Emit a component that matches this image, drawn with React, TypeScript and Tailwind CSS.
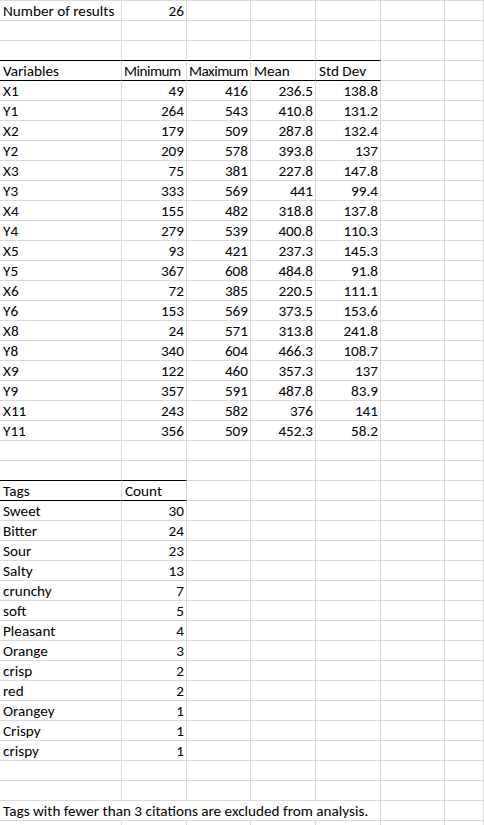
type Cell = { text?: string; right?: boolean; span?: number; tight?: boolean };
type Row = { cells: Cell[]; topBlack?: number };

const vars: [string, number, number, string, string][] = [
  ["X1", 49, 416, "236.5", "138.8"],
  ["Y1", 264, 543, "410.8", "131.2"],
  ["X2", 179, 509, "287.8", "132.4"],
  ["Y2", 209, 578, "393.8", "137"],
  ["X3", 75, 381, "227.8", "147.8"],
  ["Y3", 333, 569, "441", "99.4"],
  ["X4", 155, 482, "318.8", "137.8"],
  ["Y4", 279, 539, "400.8", "110.3"],
  ["X5", 93, 421, "237.3", "145.3"],
  ["Y5", 367, 608, "484.8", "91.8"],
  ["X6", 72, 385, "220.5", "111.1"],
  ["Y6", 153, 569, "373.5", "153.6"],
  ["X8", 24, 571, "313.8", "241.8"],
  ["Y8", 340, 604, "466.3", "108.7"],
  ["X9", 122, 460, "357.3", "137"],
  ["Y9", 357, 591, "487.8", "83.9"],
  ["X11", 243, 582, "376", "141"],
  ["Y11", 356, 509, "452.3", "58.2"],
];

const tags: [string, number][] = [
  ["Sweet", 30],
  ["Bitter", 24],
  ["Sour", 23],
  ["Salty", 13],
  ["crunchy", 7],
  ["soft", 5],
  ["Pleasant", 4],
  ["Orange", 3],
  ["crisp", 2],
  ["red", 2],
  ["Orangey", 1],
  ["Crispy", 1],
  ["crispy", 1],
];

const COLS = 7;

function buildRows(): Row[] {
  const rows: Row[] = [];
  rows.push({ cells: [{ text: "Number of results" }, { text: "26", right: true }] });
  rows.push({ cells: [] });
  rows.push({ cells: [] });
  rows.push({
    topBlack: 5,
    cells: [
      { text: "Variables" },
      { text: "Minimum", tight: true },
      { text: "Maximum", tight: true },
      { text: "Mean" },
      { text: "Std Dev" },
    ],
  });
  vars.forEach((v, i) =>
    rows.push({
      topBlack: i === 0 ? 5 : 0,
      cells: [
        { text: v[0] },
        { text: String(v[1]), right: true },
        { text: String(v[2]), right: true },
        { text: v[3], right: true },
        { text: v[4], right: true },
      ],
    })
  );
  rows.push({ cells: [] });
  rows.push({ cells: [] });
  rows.push({ topBlack: 2, cells: [{ text: "Tags" }, { text: "Count" }] });
  tags.forEach((t, i) =>
    rows.push({ topBlack: i === 0 ? 2 : 0, cells: [{ text: t[0] }, { text: String(t[1]), right: true }] })
  );
  rows.push({ cells: [] });
  rows.push({ cells: [] });
  rows.push({ cells: [{ text: "Tags with fewer than 3 citations are excluded from analysis.", span: 5 }] });
  rows.push({ cells: [] });
  return rows;
}

function SheetRow({ row }: { row: Row }) {
  const out: JSX.Element[] = [];
  let col = 0;
  while (col < COLS) {
    const cell = row.cells[col] ?? {};
    const span = cell.span ?? 1;
    const black = row.topBlack && col < row.topBlack;
    out.push(
      <div
        key={col}
        className={`h-5 border-t border-r border-r-[#dadada] overflow-visible whitespace-nowrap px-[3px] pt-[1px] leading-[18px] ${
          black ? "border-t-black" : "border-t-[#dadada]"
        } ${cell.right ? "text-right pr-[2px]" : "text-left"} ${span === 5 ? "col-span-5" : ""} ${
          cell.tight ? "tracking-[-0.5px] pl-[2px]" : ""
        }`}
      >
        {cell.text}
      </div>
    );
    col += span;
  }
  return <>{out}</>;
}

export default function App() {
  const rows = buildRows();
  return (
    <div
      className="w-[484px] h-[825px] overflow-hidden bg-white text-black text-[15.2px]"
      style={{ fontFamily: "Carlito, Lato, 'Liberation Sans', sans-serif" }}
    >
      <div className="grid grid-cols-[122px_65px_64px_65px_65px_64px_1fr]">
        {rows.map((r, i) => (
          <SheetRow key={i} row={r} />
        ))}
      </div>
    </div>
  );
}
